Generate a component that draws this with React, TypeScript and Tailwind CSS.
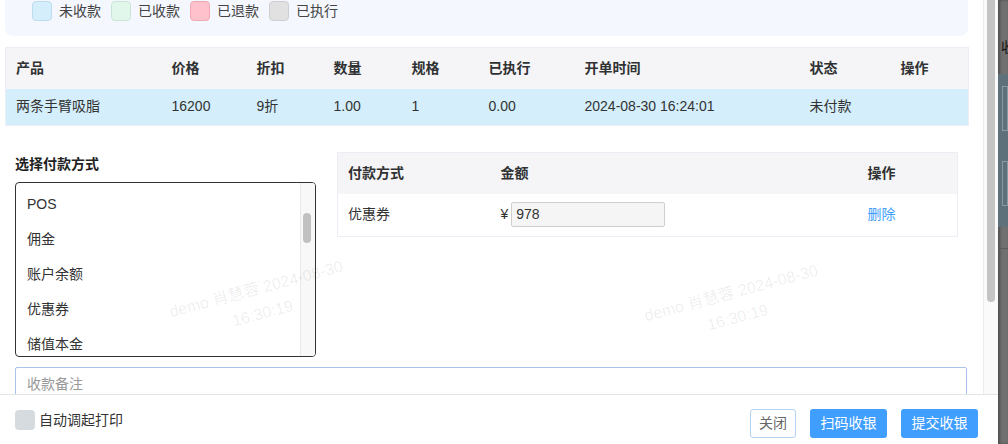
import React from "react";

const legend = [
    { label: "未收款", color: "bg-[#d4eefb] border-[#bcdcee]" },
    { label: "已收款", color: "bg-[#e2f7eb] border-[#c9e6d5]" },
    { label: "已退款", color: "bg-[#ffc1cb] border-[#f0aab5]" },
    { label: "已执行", color: "bg-[#e1e1e1] border-[#cfcfcf]" },
];

const columns = [
    { title: "产品", w: "w-[156px]" },
    { title: "价格", w: "w-[85px]" },
    { title: "折扣", w: "w-[77px]" },
    { title: "数量", w: "w-[78px]" },
    { title: "规格", w: "w-[77px]" },
    { title: "已执行", w: "w-[96px]" },
    { title: "开单时间", w: "w-[225px]" },
    { title: "状态", w: "w-[91px]" },
    { title: "操作", w: "w-[78px]" },
];

const row = ["两条手臂吸脂", "16200", "9折", "1.00", "1", "0.00", "2024-08-30 16:24:01", "未付款", ""];

const payTypes = ["POS", "佣金", "账户余额", "优惠券", "储值本金"];

function Watermark({ className }: { className: string }) {
    return (
        <div
            className={`pointer-events-none absolute -rotate-[15deg] text-center text-[16px] leading-[25px] text-[#000]/[0.08] ${className}`}
        >
            <div>demo 肖慧蓉 2024-08-30</div>
            <div>16:30:19</div>
        </div>
    );
}

export default function App() {
    return (
        <div
            className="flex h-[444px] w-[1008px] overflow-hidden bg-white text-[14px] text-[#333]"
            style={{ fontFamily: '"Liberation Sans", "Noto Sans CJK SC", sans-serif' }}
        >
            {/* Dialog */}
            <div className="flex w-[998px] flex-col">
                {/* Scroll area */}
                <div className="flex h-[395px] overflow-hidden border-b border-[#e4e4e4]">
                    <div className="relative w-[983px]">
                        {/* Legend */}
                        <div className="ml-[5px] flex h-[36px] w-[963px] items-start gap-[10px] rounded-b-lg bg-[#f4f7fd] pl-[27px] pt-px">
                            {legend.map((item) => (
                                <div key={item.label} className="flex items-center gap-[7px]">
                                    <span className={`h-[20px] w-[20px] rounded-[4px] border ${item.color}`} />
                                    <span className="leading-[20px] text-[#444]">{item.label}</span>
                                </div>
                            ))}
                        </div>

                        {/* Order table */}
                        <table className="ml-[5px] mt-[11px] w-[963px] table-fixed border-collapse border border-[#ebeef5]">
                            <thead>
                                <tr className="h-[41px] bg-[#f5f5f7]">
                                    {columns.map((c) => (
                                        <th key={c.title} className={`${c.w} px-[10px] text-left font-bold text-[#303133]`}>
                                            {c.title}
                                        </th>
                                    ))}
                                </tr>
                            </thead>
                            <tbody>
                                <tr className="h-[37px] bg-[#d4eefb]">
                                    {row.map((v, i) => (
                                        <td key={i} className="px-[10px] text-[#333]">
                                            {v}
                                        </td>
                                    ))}
                                </tr>
                            </tbody>
                        </table>

                        {/* Payment */}
                        <div className="mt-[26px] flex gap-[21px] pl-[15px]">
                            <div className="w-[301px]">
                                <div className="mt-[2px] h-[20px] font-bold leading-[20px] text-[#222]">选择付款方式</div>
                                <div className="mt-[8px] flex h-[175px] overflow-hidden rounded-[4px] border border-[#333]">
                                    <div className="flex-1 pl-[11px] pt-[4px]">
                                        {payTypes.map((p) => (
                                            <div key={p} className="flex h-[35px] items-center text-[#333]">
                                                {p}
                                            </div>
                                        ))}
                                    </div>
                                    <div className="w-[15px] border-l border-[#e8e8e8] bg-[#f8f8f8] pl-[2px] pt-[30px]">
                                        <div className="h-[30px] w-[8px] rounded-full bg-[#c1c1c1]" />
                                    </div>
                                </div>
                            </div>

                            <table className="h-fit w-[621px] table-fixed border-collapse border border-[#ebeef5]">
                                <thead>
                                    <tr className="h-[41px] bg-[#f5f5f7]">
                                        <th className="w-[153px] px-[10px] text-left font-bold text-[#303133]">付款方式</th>
                                        <th className="w-[367px] px-[10px] text-left font-bold text-[#303133]">金额</th>
                                        <th className="px-[10px] text-left font-bold text-[#303133]">操作</th>
                                    </tr>
                                </thead>
                                <tbody>
                                    <tr className="h-[43px]">
                                        <td className="px-[10px]">优惠券</td>
                                        <td className="px-[10px]">
                                            <div className="flex items-center gap-[3px]">
                                                <span>¥</span>
                                                <div className="flex h-[25px] w-[154px] items-center rounded-[2px] border border-[#cfcfcf] bg-[#f5f5f5] pl-[4px]">
                                                    978
                                                </div>
                                            </div>
                                        </td>
                                        <td className="px-[10px] text-[#409eff]">删除</td>
                                    </tr>
                                </tbody>
                            </table>
                        </div>

                        {/* Remark */}
                        <div className="ml-[15px] mt-[10px] flex h-[34px] w-[952px] items-center rounded-[2px] border border-[#a9c3ea] pl-[11px] text-[#999]">
                            收款备注
                        </div>

                        <Watermark className="left-[170px] top-[276px]" />
                        <Watermark className="left-[645px] top-[280px]" />
                    </div>

                    {/* Outer scrollbar */}
                    <div className="w-[15px] border-l border-[#ececec] bg-[#fafafa] pl-[3px]">
                        <div className="h-[302px] w-[8px] rounded-b-full bg-[#c4c4c4]" />
                    </div>
                </div>

                {/* Footer */}
                <div className="flex flex-1 items-start justify-between pl-[15px] pr-[20px]">
                    <div className="mt-[15px] flex items-center gap-[4px]">
                        <span className="h-[20px] w-[20px] rounded-[4px] bg-[#d6dbe0]" />
                        <span className="leading-[20px]">自动调起打印</span>
                    </div>
                    <div className="mt-[14px] flex gap-[14px]">
                        <button className="h-[29px] w-[46px] rounded-[3px] border border-[#b3d3f5] bg-white text-[#666]">
                            关闭
                        </button>
                        <button className="h-[29px] w-[77px] rounded-[3px] bg-[#409eff] text-white">扫码收银</button>
                        <button className="h-[29px] w-[77px] rounded-[3px] bg-[#409eff] text-white">提交收银</button>
                    </div>
                </div>
            </div>

            {/* Backdrop with the page behind */}
            <div className="flex w-[10px] flex-col bg-[#707070] shadow-[inset_2px_0_3px_rgba(0,0,0,0.3)]">
                <div className="h-[36px]" />
                <div className="h-[22px] overflow-hidden pl-[3px] text-[14px] leading-[22px] text-[#111]">收</div>
                <div className="h-[16px]" />
                <div className="h-[153px] bg-[#5e7079] pl-[4px] pt-[12px]">
                    <div className="h-[45px] border border-[#8a9aa2]" />
                    <div className="mt-[30px] h-[45px] border border-[#8a9aa2]" />
                </div>
                <div className="h-[22px] border-b border-[#5a5a5a]" />
            </div>
        </div>
    );
}
